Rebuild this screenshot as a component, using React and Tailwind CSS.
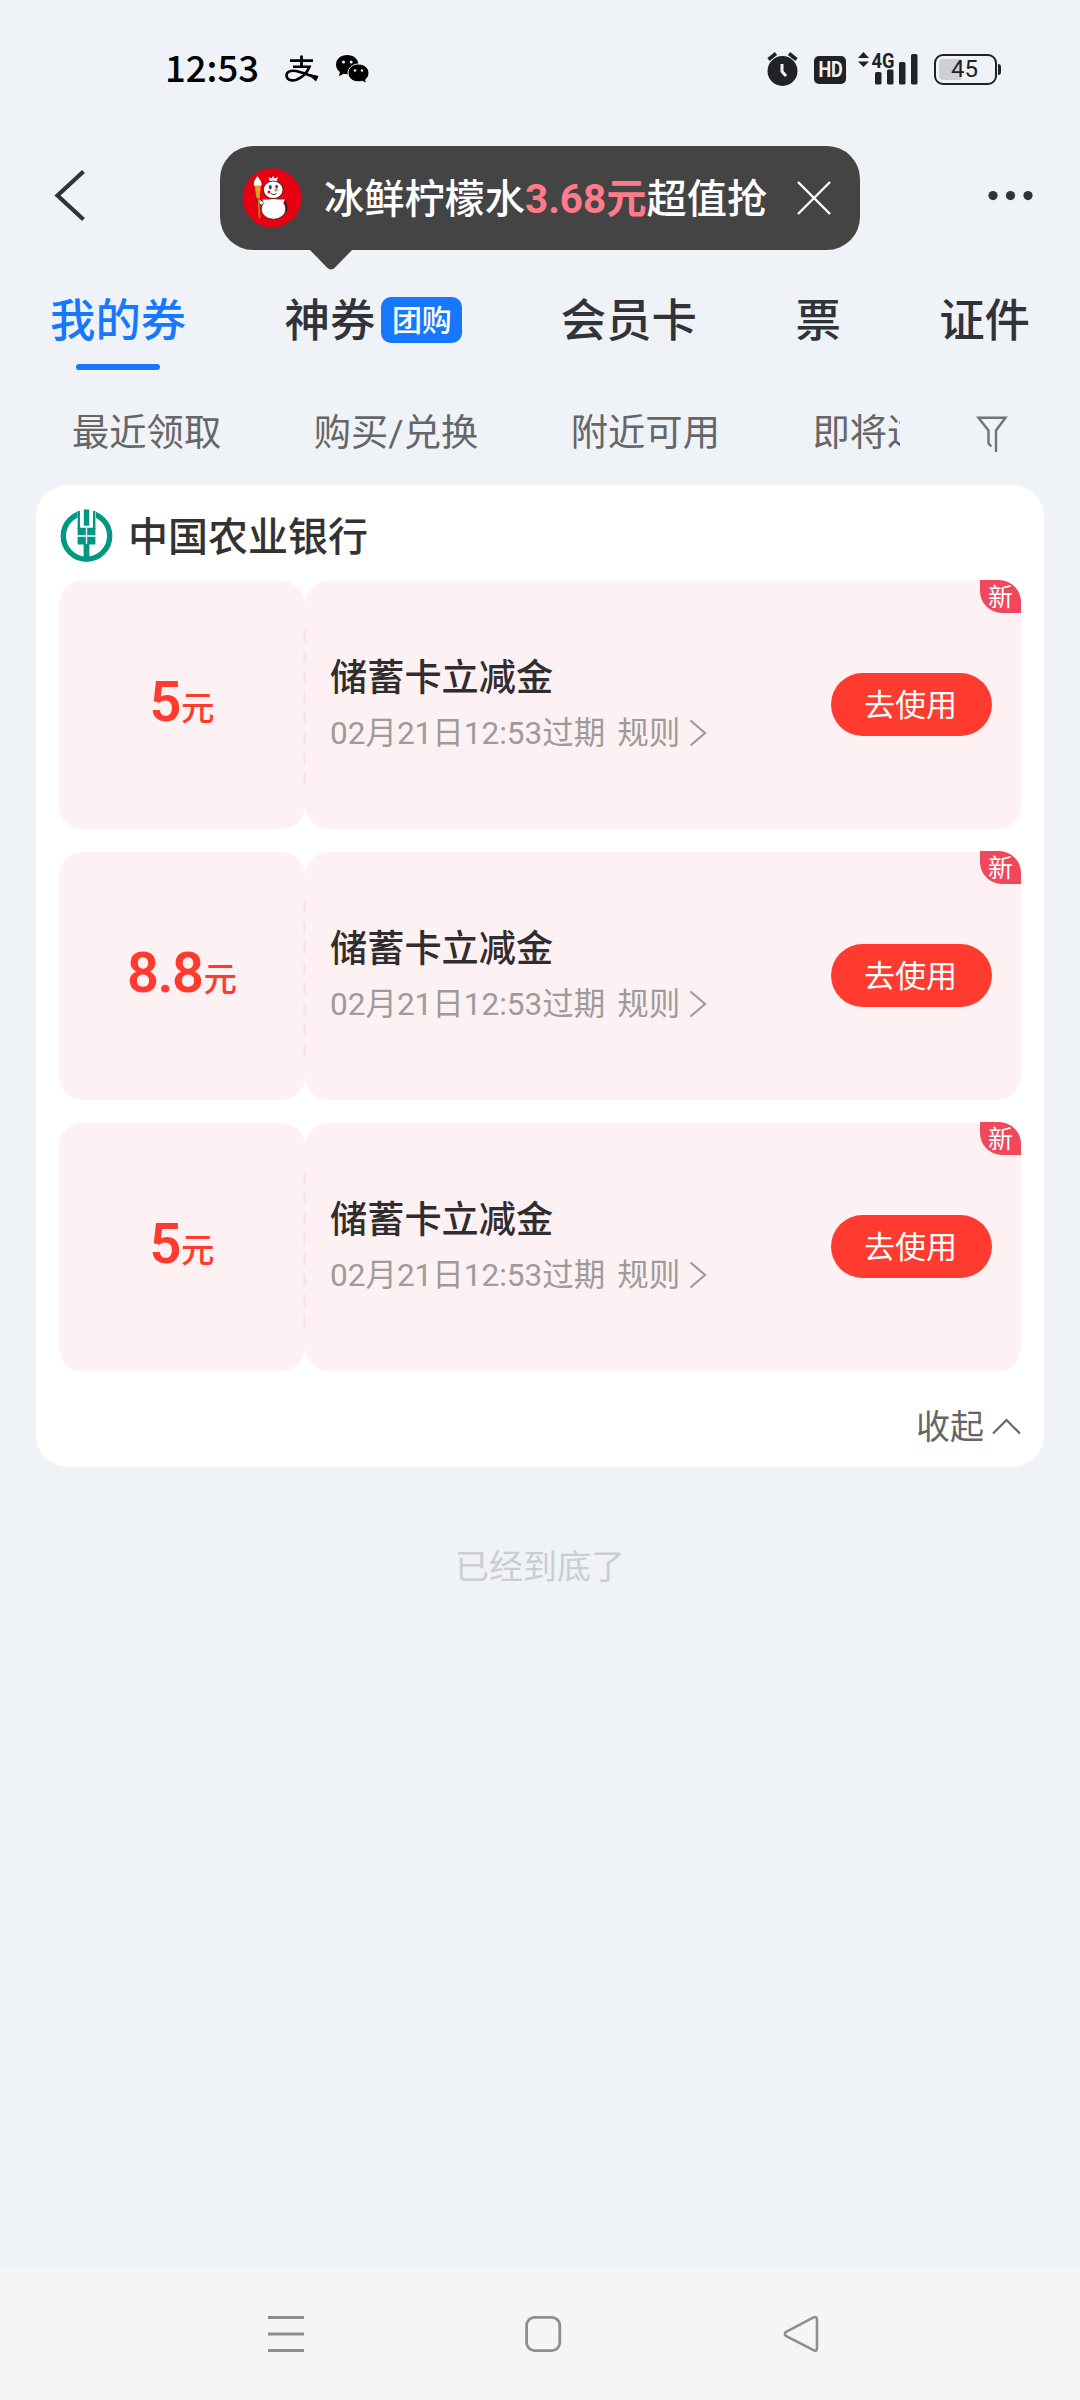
import { useState } from "react";

const TABS = [
    { id: "mine", label: "我的券" },
    { id: "deals", label: "神券", badge: "团购" },
    { id: "member", label: "会员卡" },
    { id: "ticket", label: "票" },
    { id: "cert", label: "证件" },
];

const FILTERS = ["最近领取", "购买/兑换", "附近可用", "即将过期"];

const COUPONS = [
    { id: 1, amount: "5", title: "储蓄卡立减金", expire: "02月21日12:53过期" },
    { id: 2, amount: "8.8", title: "储蓄卡立减金", expire: "02月21日12:53过期" },
    { id: 3, amount: "5", title: "储蓄卡立减金", expire: "02月21日12:53过期" },
];

function StatusBar() {
    return (
        <div className="flex h-[138px] items-start justify-between pt-[48px] pr-[79px] pl-[165px]">
            <div className="flex h-[42px] items-center">
                <span className="-mt-[4px] w-[120px] font-['Noto_Sans_CJK_SC','Roboto',sans-serif] text-[36.5px] leading-[42px] font-medium text-black">12:53</span>
                <svg width="34" height="28" viewBox="0 0 34 28" fill="none" stroke="#000">
                    <path d="M5 5.6H28M16.5 0.5V12" strokeWidth="2.8" />
                    <path d="M8 11.8H24.5C22 18 17 22.5 11.5 24.7C6 26.5 1.5 24.5 1.5 20.5C1.5 16.5 6 15 11 16C18 17.4 25 21 32.5 22.6" strokeWidth="2.6" />
                    <path d="M22 18.5L33.5 21L31 26.5Z" fill="#000" stroke="none" />
                </svg>
                <svg className="ml-[16px]" width="35" height="30" viewBox="0 0 35 30">
                    <path d="M12.2 1C5.7 1 1 5.2 1 10.6C1 13.6 2.5 16.2 4.9 18L4 22.3L8.6 19.7C9.8 20 11 20.2 12.2 20.2C18.6 20.2 23.4 16 23.4 10.6C23.4 5.2 18.6 1 12.2 1Z" fill="#000" />
                    <path d="M23.4 10C17.5 10 13 14 13 19C13 24 17.5 27.8 23.4 27.8C24.7 27.8 26 27.6 27.2 27.2L31.4 29.3L30.6 25.7C32.7 24 34 21.7 34 19C34 14 29.4 10 23.4 10Z" fill="#000" stroke="#eff3f8" strokeWidth="1" />
                    <circle cx="8.5" cy="8" r="1.5" fill="#eff3f8" />
                    <circle cx="16.2" cy="8" r="1.5" fill="#eff3f8" />
                    <circle cx="20" cy="16.5" r="1.2" fill="#eff3f8" />
                    <circle cx="27" cy="16.5" r="1.2" fill="#eff3f8" />
                </svg>
            </div>

            <div className="flex h-[42px] items-center">
                {/* Alarm */}
                <svg width="32" height="36" viewBox="0 0 32 36">
                    <circle cx="15.5" cy="20" r="15" fill="#202226" />
                    <path d="M1.5 8.5L9 2.5M29.5 8.5L22 2.5" stroke="#202226" strokeWidth="3.6" />
                    <path d="M15 13V20.5L19 25" fill="none" stroke="#eff3f8" strokeWidth="3" />
                </svg>
                <span className="mt-[2px] ml-[15px] flex h-[28px] w-[32px] items-center justify-center rounded-[5px] bg-[#202226] text-[22px] leading-[28px] font-bold tracking-[-0.5px] text-[#eff3f8]">
                    <span className="scale-x-[0.82]">HD</span>
                </span>
                {/* Mobile signal */}
                <svg className="ml-[12px] overflow-visible" width="62" height="36" viewBox="0 0 62 36" fill="#202226">
                    <path d="M0 7L5.5 1L11 7ZM0 10.5H11L5.5 16Z" />
                    <text x="13.5" y="17" fontSize="21" fontWeight="700" textLength="23" lengthAdjust="spacingAndGlyphs">4G</text>
                    <rect x="17" y="21" width="6.5" height="12.5" rx="1.5" />
                    <rect x="29" y="18.5" width="6.5" height="15" rx="1.5" />
                    <rect x="41" y="11" width="6.5" height="22.5" rx="1.5" />
                    <rect x="53" y="3" width="6.5" height="30.5" rx="1.5" />
                </svg>
                <div className="ml-[14px] flex h-[31px] w-[63px] items-center rounded-[9px] border-2 border-[#202226] p-[3px]">
                    <div className="h-full w-[22px] rounded-l-[4px] bg-[#cfd0d5]"></div>
                    <span className="-ml-[10px] text-[24px] leading-[24px] text-[#202226]">45</span>
                </div>
                <div className="ml-[1px] h-[11px] w-[3px] rounded-r-sm bg-[#202226]"></div>
            </div>
        </div>
    );
}

function SnowmanLogo() {
    return (
        <svg width="60" height="60" viewBox="0 0 60 60">
            <circle cx="30" cy="30" r="29.5" fill="#e60012" />
            <path d="M21 33.5Q17 30 15 32Q15 36 21 37.5" fill="#fff" stroke="#3a1512" strokeWidth="1" />
            <path d="M41 31.5Q45.5 35 44 44" fill="none" stroke="#3a1512" strokeWidth="1.8" />
            <path d="M16.5 27L17.5 50" stroke="#b5792e" strokeWidth="1.8" />
            <path d="M12.5 17H19L17.5 30H14.5Z" fill="#e79a35" />
            <path d="M15.5 8C12.5 12 11.5 14 12 17.5H19.5C20 13 17.5 12 15.5 8Z" fill="#fff" />
            <path d="M28 13.5L26.5 9L29.5 10.5L31 8L32.8 10.5L36 9L34.5 13.5Z" fill="#fff" />
            <ellipse cx="31.5" cy="41" rx="12.3" ry="10.3" fill="#fff" stroke="#3a1512" strokeWidth="0.8" />
            <path d="M20.5 31.5H43L41 36H22Z" fill="#fff" />
            <ellipse cx="31.2" cy="21.8" rx="9.8" ry="8.8" fill="#fff" stroke="#3a1512" strokeWidth="0.8" />
            <ellipse cx="28.3" cy="19.3" rx="1.4" ry="2.2" fill="#27408e" />
            <ellipse cx="34.6" cy="18.8" rx="1.3" ry="2" fill="#27408e" />
            <path d="M32.5 20.5L37 22L33 24Z" fill="#f08a24" />
            <circle cx="27" cy="24" r="1.5" fill="#e60012" />
            <path d="M28.8 25.5Q32 28 34.5 25.5" fill="none" stroke="#3a1512" strokeWidth="0.9" />
        </svg>
    );
}

function Header({ showTip, onCloseTip }) {
    return (
        <div className="flex h-[132px] items-start justify-between pt-[8px] pr-[46px] pl-[54px]">
            <button className="mt-[24px] w-[166px]">
                <svg width="32" height="52" viewBox="0 0 32 52" fill="none" stroke="#323338" strokeWidth="4.2">
                    <path d="M29.5 1.5L3.5 25.5L29.5 49.5" />
                </svg>
            </button>

            {showTip && (
                <div className="relative flex h-[104px] w-[640px] items-center rounded-[33px] bg-[#444] pl-[22px]">
                    <SnowmanLogo />
                    <p className="mt-[3px] ml-[22px] w-[444px] text-[40.2px] leading-[60px] font-medium whitespace-nowrap text-white">
                        冰鲜柠檬水<span className="text-[40.4px] font-bold text-[#ff7b8a]">3.68元</span>超值抢
                    </p>
                    <button className="ml-[29px]" onClick={onCloseTip}>
                        <svg width="34" height="34" viewBox="0 0 34 34" stroke="#fff" strokeWidth="2.4">
                            <path d="M1 1L33 33M33 1L1 33" />
                        </svg>
                    </button>
                    <svg className="absolute top-[103px] left-[89px]" width="44" height="22" viewBox="0 0 44 22">
                        <path d="M0 0H44L26 18.5Q22 22.5 18 18.5Z" fill="#444" />
                    </svg>
                </div>
            )}

            <button className="mt-[45px] ml-auto">
                <svg width="46" height="10" viewBox="0 0 46 10" fill="#323338">
                    <circle cx="5" cy="4.6" r="4.6" />
                    <circle cx="22.5" cy="4.6" r="4.6" />
                    <circle cx="40" cy="4.6" r="4.6" />
                </svg>
            </button>
        </div>
    );
}

function Tabs({ active, onChange }) {
    return (
        <div className="flex h-[116px] items-start justify-between pt-[22px] pr-[50px] pl-[50px]">
            {TABS.map(tab => (
                <button
                    key={tab.id}
                    onClick={() => onChange(tab.id)}
                    className={`flex flex-col items-center text-[45.4px] leading-[60px] font-medium ${active === tab.id ? "text-[#1677ff]" : "text-[#323338]"}`}
                >
                    <span className="flex items-center">
                        {tab.label}
                        {tab.badge && (
                            <span className="-mt-[4px] ml-[6px] flex h-[46px] w-[81px] items-center justify-center rounded-[10px] bg-[#1677ff] pt-[2px] text-[30px] font-medium text-white">
                                {tab.badge}
                            </span>
                        )}
                    </span>
                    {active === tab.id && <span className="mt-[12px] h-[6px] w-[84px] rounded-full bg-[#1677ff]"></span>}
                </button>
            ))}
        </div>
    );
}

function FilterRow() {
    return (
        <div className="flex h-[99px] items-start pt-[22px] pl-[72px]">
            <div className="flex w-[828px] gap-[92.5px] overflow-hidden text-[37.3px] leading-[50px] whitespace-nowrap text-[#666]">
                {FILTERS.map(filter => (
                    <span key={filter}>{filter}</span>
                ))}
            </div>
            <svg className="mt-[7px] ml-[76px]" width="32" height="38" viewBox="0 0 32 38" fill="none" stroke="#707276" strokeWidth="2.4">
                <path d="M15.5 31.5L12.5 28.5V15.5L2.5 2.8H29.5L20 15.5V37" />
            </svg>
        </div>
    );
}

function BankLogo() {
    return (
        <svg width="54" height="56" viewBox="0 0 54 56">
            <circle cx="27.5" cy="28" r="23.2" fill="none" stroke="#009882" strokeWidth="5.4" />
            <path d="M18.5 0H37V24H18.5Z" fill="#fff" />
            <path d="M24.8 1.5H30.2V18H24.8Z" fill="#009882" />
            <path d="M19.8 3V20H35.2V3" fill="none" stroke="#009882" strokeWidth="2.4" />
            <path d="M18.6 20H36.4V36.5H30.4V53H24.6V36.5H18.6Z" fill="#009882" />
            <path d="M22.2 1V18.8H32.8V1" fill="none" stroke="#fff" strokeWidth="2" />
            <path d="M18 28H37M27.5 20V36" stroke="#fff" strokeWidth="1.3" />
        </svg>
    );
}

function CouponCard({ coupon }) {
    return (
        <div className="relative flex h-[248px]">
            <div className="flex w-[246px] items-center justify-center rounded-[24px] bg-[#fef1f3] pb-[7px] text-[#ff3b30]">
                <p className="flex items-baseline font-medium">
                    <span className="text-[56px] leading-[70px] font-semibold tracking-[-1.5px]">{coupon.amount}</span>
                    <span className="relative -top-px ml-[1px] text-[33.5px]">元</span>
                </p>
            </div>
            <div className="flex flex-1 items-center justify-between rounded-[24px] bg-[#fef1f3] pr-[29px] pl-[25px]">
                <div className="pt-[2px]">
                    <h3 className="text-[37.2px] leading-[52px] font-medium text-[#302d2f]">{coupon.title}</h3>
                    <p className="mt-[4px] flex items-center text-[31.5px] leading-[52px] text-[#a09a9b]">
                        {coupon.expire}
                        <span className="ml-[12px]">规则</span>
                        <svg className="mb-[2px] ml-[9px]" width="18" height="28" viewBox="0 0 18 28" fill="none" stroke="currentColor" strokeWidth="2.2">
                            <path d="M1.5 1.5L16 14L1.5 26.5" />
                        </svg>
                    </p>
                </div>
                <button className="mb-px h-[63px] w-[161px] rounded-full bg-[#ff3b30] pr-[2px] text-[31px] leading-[65px] text-white">去使用</button>
            </div>
            {/* Tear line between the amount and the details */}
            <svg className="absolute top-[49px] left-[244px]" width="3" height="158" viewBox="0 0 3 158">
                <path d="M1.5 0V158" stroke="#fbdfe3" strokeWidth="2" strokeDasharray="12 8.4" />
            </svg>
            <span className="absolute -top-px right-0 h-[33px] w-[41px] rounded-tr-[22px] rounded-bl-[22px] bg-[#f0475d] text-center text-[25px] leading-[35px] text-white">
                新
            </span>
        </div>
    );
}

function NavBar() {
    return (
        <div className="mt-auto flex h-[131px] items-start justify-between bg-[#f5f5f5] px-[267px] pt-[46px]">
            <svg width="38" height="38" viewBox="0 0 38 38" stroke="#8e8e8e" strokeWidth="3">
                <path d="M1 2.5H37M1 19H37M1 35.5H37" />
            </svg>
            <svg width="38" height="38" viewBox="0 0 38 38" fill="none" stroke="#8e8e8e" strokeWidth="2.8">
                <rect x="1.6" y="2.4" width="33.2" height="33.2" rx="8" />
            </svg>
            <svg className="-mr-[8px]" width="38" height="38" viewBox="0 0 38 38" fill="none" stroke="#8e8e8e" strokeWidth="2.6" strokeLinejoin="round">
                <path d="M3.2 16.8L30.5 2.4Q34 1 34 5V33Q34 37 30.5 35.2L3.2 21.2Q0.5 19 3.2 16.8Z" />
            </svg>
        </div>
    );
}

export default function App() {
    const [activeTab, setActiveTab] = useState("mine");
    const [showTip, setShowTip] = useState(true);

    return (
        <div className="flex h-[2400px] w-[1080px] flex-col overflow-hidden bg-[#eff3f8] font-['Roboto','Noto_Sans_CJK_SC',sans-serif]">
            <StatusBar />
            <Header showTip={showTip} onCloseTip={() => setShowTip(false)} />
            <Tabs active={activeTab} onChange={setActiveTab} />
            <FilterRow />

            <div className="mx-[36px] h-[982px] rounded-[32px] bg-white px-[23px] pt-[23px]">
                <div className="flex h-[56px] items-center">
                    <BankLogo />
                    <h2 className="mt-[3px] ml-[15px] text-[40px] leading-[56px] font-medium text-[#333]">中国农业银行</h2>
                </div>
                <div className="mt-[17px] flex flex-col gap-[23px]">
                    {COUPONS.map(coupon => (
                        <CouponCard key={coupon.id} coupon={coupon} />
                    ))}
                </div>
                <div className="mt-[30px] flex h-[52px] items-center justify-end gap-[8px] text-[34px] leading-[52px] text-[#666]">
                    收起
                    <svg className="-mt-[2px]" width="29" height="17" viewBox="0 0 29 17" fill="none" stroke="#666" strokeWidth="2.2">
                        <path d="M1 15.5L14.5 2L28 15.5" />
                    </svg>
                </div>
            </div>

            <p className="mt-[75px] text-center text-[34px] leading-[50px] text-[#cccdd2]">已经到底了</p>
            <NavBar />
        </div>
    );
}
